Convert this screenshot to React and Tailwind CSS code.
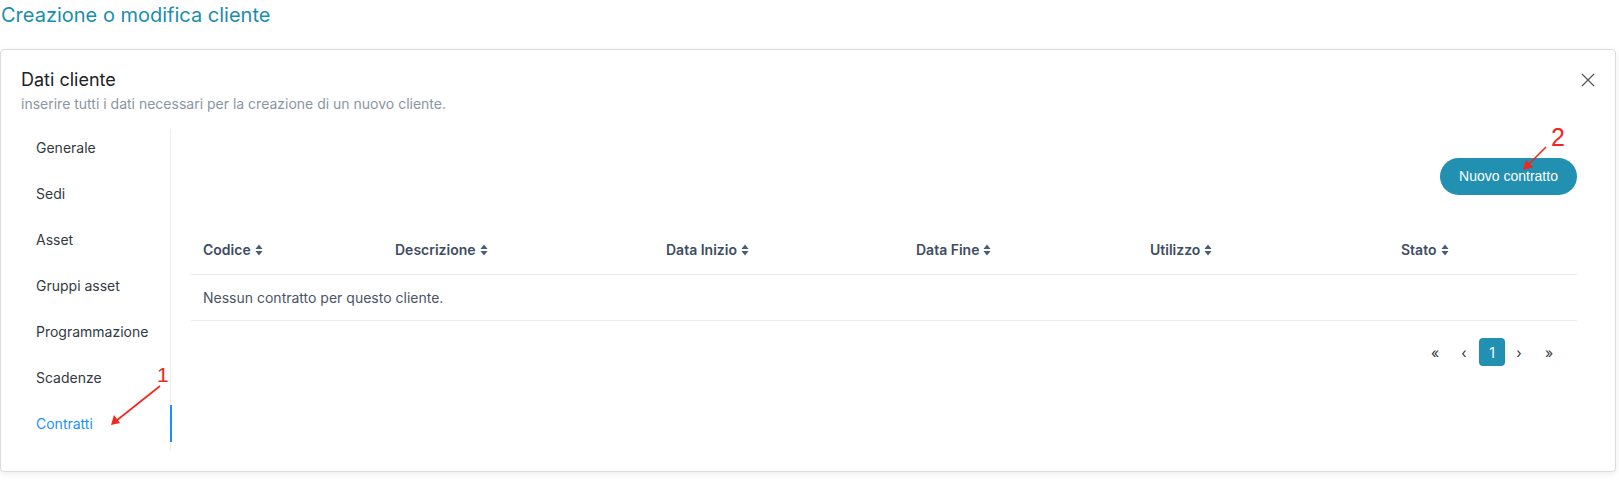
import React from "react";

const SortIcon = () => (
  <svg width="8" height="12" viewBox="0 0 8 12" className="ml-[4px] shrink-0">
    <path d="M4 0.5 L7.5 5 L0.5 5 Z" fill="#4b5b71" />
    <path d="M4 11.5 L7.5 7 L0.5 7 Z" fill="#4b5b71" />
  </svg>
);

const navItems = [
  "Generale",
  "Sedi",
  "Asset",
  "Gruppi asset",
  "Programmazione",
  "Scadenze",
  "Contratti",
];

const cols = ["Codice", "Descrizione", "Data Inizio", "Data Fine", "Utilizzo", "Stato"];

export default function App() {
  return (
    <div
      className="relative w-[1619px] h-[485px] bg-white overflow-hidden"
      style={{ fontFamily: "Inter, 'Noto Sans', sans-serif" }}
    >
      <div className="h-[49px] pl-[1px] pt-[1px] text-[20px] leading-[28px] text-[#1b8db0]">
        Creazione o modifica cliente
      </div>

      <div className="ml-[0px] mr-[3px] h-[423px] border border-[#dcdcdc] rounded-[4px] bg-white shadow-[0_2px_6px_rgba(0,0,0,0.07)] flex flex-col">
        <div className="relative pl-[20px] pt-[20px]">
          <div className="text-[18px] leading-[20px] text-[#222]">Dati cliente</div>
          <div className="mt-[6px] text-[14px] leading-[16px] text-[#8a96a3]">
            inserire tutti i dati necessari per la creazione di un nuovo cliente.
          </div>
          <button className="absolute right-[20px] top-[23px] w-[14px] h-[14px] flex items-center justify-center">
            <svg width="14" height="14" viewBox="0 0 14 14">
              <path d="M1 1 L13 13 M13 1 L1 13" stroke="#555" strokeWidth="1.2" fill="none" />
            </svg>
          </button>
        </div>

        <div className="mt-[17px] flex">
          <div className="w-[170px] h-[321px] border-r border-[#ececec] flex flex-col gap-[9px] shrink-0">
            {navItems.map((n) => {
              const active = n === "Contratti";
              return (
                <div
                  key={n}
                  className={
                    "relative h-[37px] flex items-center pl-[35px] text-[14px] " +
                    (active ? "text-[#1890ff]" : "text-[#333a42]")
                  }
                >
                  {n}
                  {active && (
                    <div className="absolute right-[-2px] top-0 w-[2px] h-[37px] bg-[#1890ff]" />
                  )}
                </div>
              );
            })}
          </div>

          <div className="flex-1 pl-[20px] pr-[38px] pt-[29px]">
            <div className="flex justify-end">
              <button
                className="h-[37px] w-[137px] rounded-full bg-[#2190b1] text-white text-[14px]"
                style={{ fontFamily: "'Liberation Sans', Arial, sans-serif" }}
              >
                Nuovo contratto
              </button>
            </div>

            <div className="mt-[30px]">
              <div className="grid grid-cols-[192px_271px_250px_234px_251px_1fr] h-[50px] items-center border-b border-[#ebebeb]">
                {cols.map((c) => (
                  <div key={c} className="pl-[12px] flex items-center text-[14px] font-semibold text-[#3d4d63]">
                    {c}
                    <SortIcon />
                  </div>
                ))}
              </div>
              <div className="h-[46px] flex items-center pl-[12px] border-b border-[#ebebeb] text-[14px] text-[#4a5566]">
                Nessun contratto per questo cliente.
              </div>
              <div className="mt-[17px] flex justify-end items-center pr-[14px] text-[#333] text-[14px]">
                <div className="w-[28px] h-[28px] flex items-center justify-center">«</div>
                <div className="ml-[1px] w-[28px] h-[28px] flex items-center justify-center">‹</div>
                <div className="ml-[1px] w-[26px] h-[28px] rounded-[4px] bg-[#2190b1] text-white flex items-center justify-center">
                  1
                </div>
                <div className="ml-[1px] w-[26px] h-[28px] flex items-center justify-center">›</div>
                <div className="ml-[3px] w-[28px] h-[28px] flex items-center justify-center">»</div>
              </div>
            </div>
          </div>
        </div>
      </div>

      <svg className="absolute inset-0 pointer-events-none" width="1619" height="485">
        <line x1="160" y1="386" x2="116" y2="421" stroke="#f2261b" strokeWidth="1.6" />
        <path d="M111 425 L114 415 L120 423 Z" fill="#f2261b" />
        <text x="157" y="382" fill="#f2261b" fontSize="21" style={{ fontFamily: "'Liberation Sans', Arial, sans-serif" }}>1</text>
        <line x1="1546" y1="147" x2="1527" y2="166" stroke="#f2261b" strokeWidth="1.6" />
        <path d="M1523 170 L1526 160 L1533 167 Z" fill="#f2261b" />
        <text x="1551" y="146" fill="#f2261b" fontSize="25" style={{ fontFamily: "'Liberation Sans', Arial, sans-serif" }}>2</text>
      </svg>
    </div>
  );
}
